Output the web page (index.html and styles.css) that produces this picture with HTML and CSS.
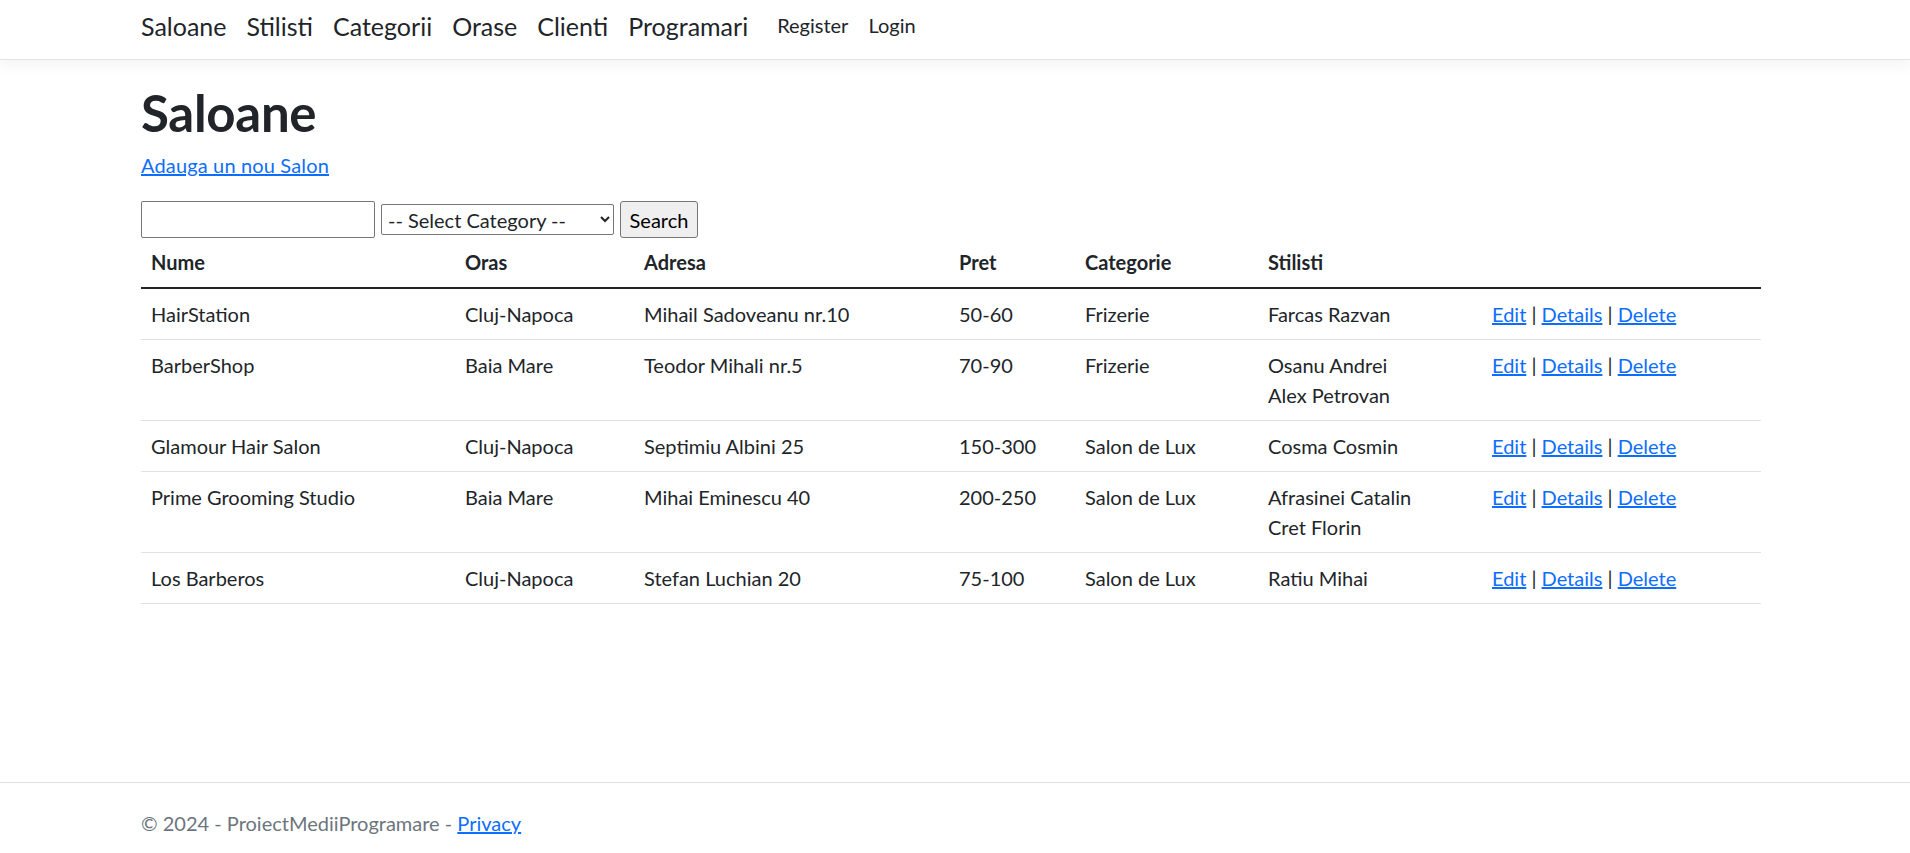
FILE: index.html
```html
<!DOCTYPE html>
<html lang="ro">
<head>
<meta charset="utf-8">
<title>Saloane - ProiectMediiProgramare</title>
<link rel="stylesheet" href="styles.css">
</head>
<body>
<header class="navbar">
  <nav class="nav-inner">
    <ul class="main-nav">
      <li><a class="nav-link" href="#">Saloane</a></li>
      <li><a class="nav-link" href="#">Stilisti</a></li>
      <li><a class="nav-link" href="#">Categorii</a></li>
      <li><a class="nav-link" href="#">Orase</a></li>
      <li><a class="nav-link" href="#">Clienti</a></li>
      <li><a class="nav-link" href="#">Programari</a></li>
    </ul>
    <ul class="auth-nav">
      <li><a class="nav-link small" href="#">Register</a></li>
      <li><a class="nav-link small" href="#">Login</a></li>
    </ul>
  </nav>
</header>

<main class="container">
  <h1 class="title">Saloane</h1>
  <p class="create"><a href="#">Adauga un nou Salon</a></p>
  <form class="search">
    <input class="search-input" type="text">
    <select class="search-select">
      <option>-- Select Category --</option>
    </select>
    <button class="search-btn" type="button">Search</button>
  </form>
  <table class="table">
    <thead>
      <tr>
        <th class="c-nume">Nume</th>
        <th class="c-oras">Oras</th>
        <th class="c-adresa">Adresa</th>
        <th class="c-pret">Pret</th>
        <th class="c-cat">Categorie</th>
        <th class="c-stil">Stilisti</th>
        <th class="c-act"></th>
      </tr>
    </thead>
    <tbody>
      <tr>
        <td>HairStation</td><td>Cluj-Napoca</td><td>Mihail Sadoveanu nr.10</td><td>50-60</td><td>Frizerie</td>
        <td><div>Farcas Razvan</div></td>
        <td><a href="#">Edit</a> | <a href="#">Details</a> | <a href="#">Delete</a></td>
      </tr>
      <tr>
        <td>BarberShop</td><td>Baia Mare</td><td>Teodor Mihali nr.5</td><td>70-90</td><td>Frizerie</td>
        <td><div>Osanu Andrei</div><div>Alex Petrovan</div></td>
        <td><a href="#">Edit</a> | <a href="#">Details</a> | <a href="#">Delete</a></td>
      </tr>
      <tr>
        <td>Glamour Hair Salon</td><td>Cluj-Napoca</td><td>Septimiu Albini 25</td><td>150-300</td><td>Salon de Lux</td>
        <td><div>Cosma Cosmin</div></td>
        <td><a href="#">Edit</a> | <a href="#">Details</a> | <a href="#">Delete</a></td>
      </tr>
      <tr>
        <td>Prime Grooming Studio</td><td>Baia Mare</td><td>Mihai Eminescu 40</td><td>200-250</td><td>Salon de Lux</td>
        <td><div>Afrasinei Catalin</div><div>Cret Florin</div></td>
        <td><a href="#">Edit</a> | <a href="#">Details</a> | <a href="#">Delete</a></td>
      </tr>
      <tr>
        <td>Los Barberos</td><td>Cluj-Napoca</td><td>Stefan Luchian 20</td><td>75-100</td><td>Salon de Lux</td>
        <td><div>Ratiu Mihai</div></td>
        <td><a href="#">Edit</a> | <a href="#">Details</a> | <a href="#">Delete</a></td>
      </tr>
    </tbody>
  </table>
</main>

<footer class="footer">
  <div class="footer-inner">&copy; 2024 - ProiectMediiProgramare - <a href="#">Privacy</a></div>
</footer>
</body>
</html>
```

FILE: styles.css
```css
* { box-sizing: border-box; }

html, body { margin: 0; padding: 0; }

body {
  font-family: Lato, "Noto Sans", "Liberation Sans", sans-serif;
  font-size: 20px;
  line-height: 30px;
  color: #212529;
  background: #fff;
  min-height: 100vh;
  display: flex;
  flex-direction: column;
}

a { color: #0d6efd; text-decoration: underline; }

/* Navbar */
.navbar {
  height: 60px;
  background: #fff;
  border-bottom: 1px solid #e3e4e8;
  box-shadow: 0 5px 15px rgba(0, 0, 0, 0.05);
  margin-bottom: 20px;
}

.nav-inner {
  height: 59px;
  display: flex;
  align-items: flex-start;
  padding-left: 131px;
}

.main-nav, .auth-nav {
  list-style: none;
  margin: 0;
  padding: 0;
  display: flex;
  align-items: center;
}

.main-nav { padding-top: 8px; }
.auth-nav { margin-left: 9px; padding-top: 10px; }

.nav-link {
  display: block;
  padding: 0 10px;
  font-size: 25px;
  line-height: 36px;
  color: #212529;
  text-decoration: none;
}

.nav-link.small {
  font-size: 20px;
  line-height: 30px;
}

/* Main */
.container {
  padding: 0 149px 0 141px;
}

.title {
  margin: 0 0 7px;
  padding-top: 3px;
  font-size: 51px;
  line-height: 60px;
  font-weight: 700;
  letter-spacing: -0.3px;
}

.create {
  margin: 0 0 21px;
}

.create a { letter-spacing: 0.15px; }

.search {
  display: flex;
  align-items: center;
  gap: 6px;
  height: 37px;
}

.search-input {
  flex: none;
  width: 234px;
  height: 37px;
  border: 1px solid #767676;
  border-radius: 2px;
  font: inherit;
  padding: 1px 2px;
}

.search-select {
  flex: none;
  width: 233px;
  height: 31px;
  font-family: inherit;
  font-size: 20px;
  border: 1px solid #767676;
  border-radius: 2px;
  background: #fff;
  color: #212529;
  padding: 0 2px;
}

.search-btn {
  flex: none;
  width: 78px;
  height: 37px;
  font-family: inherit;
  font-size: 20px;
  background: #efefef;
  border: 1px solid #767676;
  border-radius: 3px;
  color: #000;
  padding: 0 6px;
}

.table {
  width: 100%;
  border-collapse: collapse;
  margin-bottom: 20px;
}

.table th, .table td {
  padding: 10px;
  text-align: left;
  vertical-align: top;
}

.table th {
  padding-top: 9px;
  font-weight: 700;
  border-bottom: 2px solid #212529;
}

.table td {
  border-bottom: 1px solid #dee2e6;
}

.c-nume { width: 314px; }
.c-oras { width: 179px; }
.c-adresa { width: 315px; }
.c-pret { width: 126px; }
.c-cat { width: 183px; }
.c-stil { width: 224px; }
.c-act { width: auto; }

/* Footer */
.footer {
  margin-top: auto;
  border-top: 1px solid #dee2e6;
  color: #6c757d;
  padding: 25px 0 15px;
  white-space: nowrap;
}

.footer-inner {
  padding-left: 141px;
  line-height: 30px;
}
```
